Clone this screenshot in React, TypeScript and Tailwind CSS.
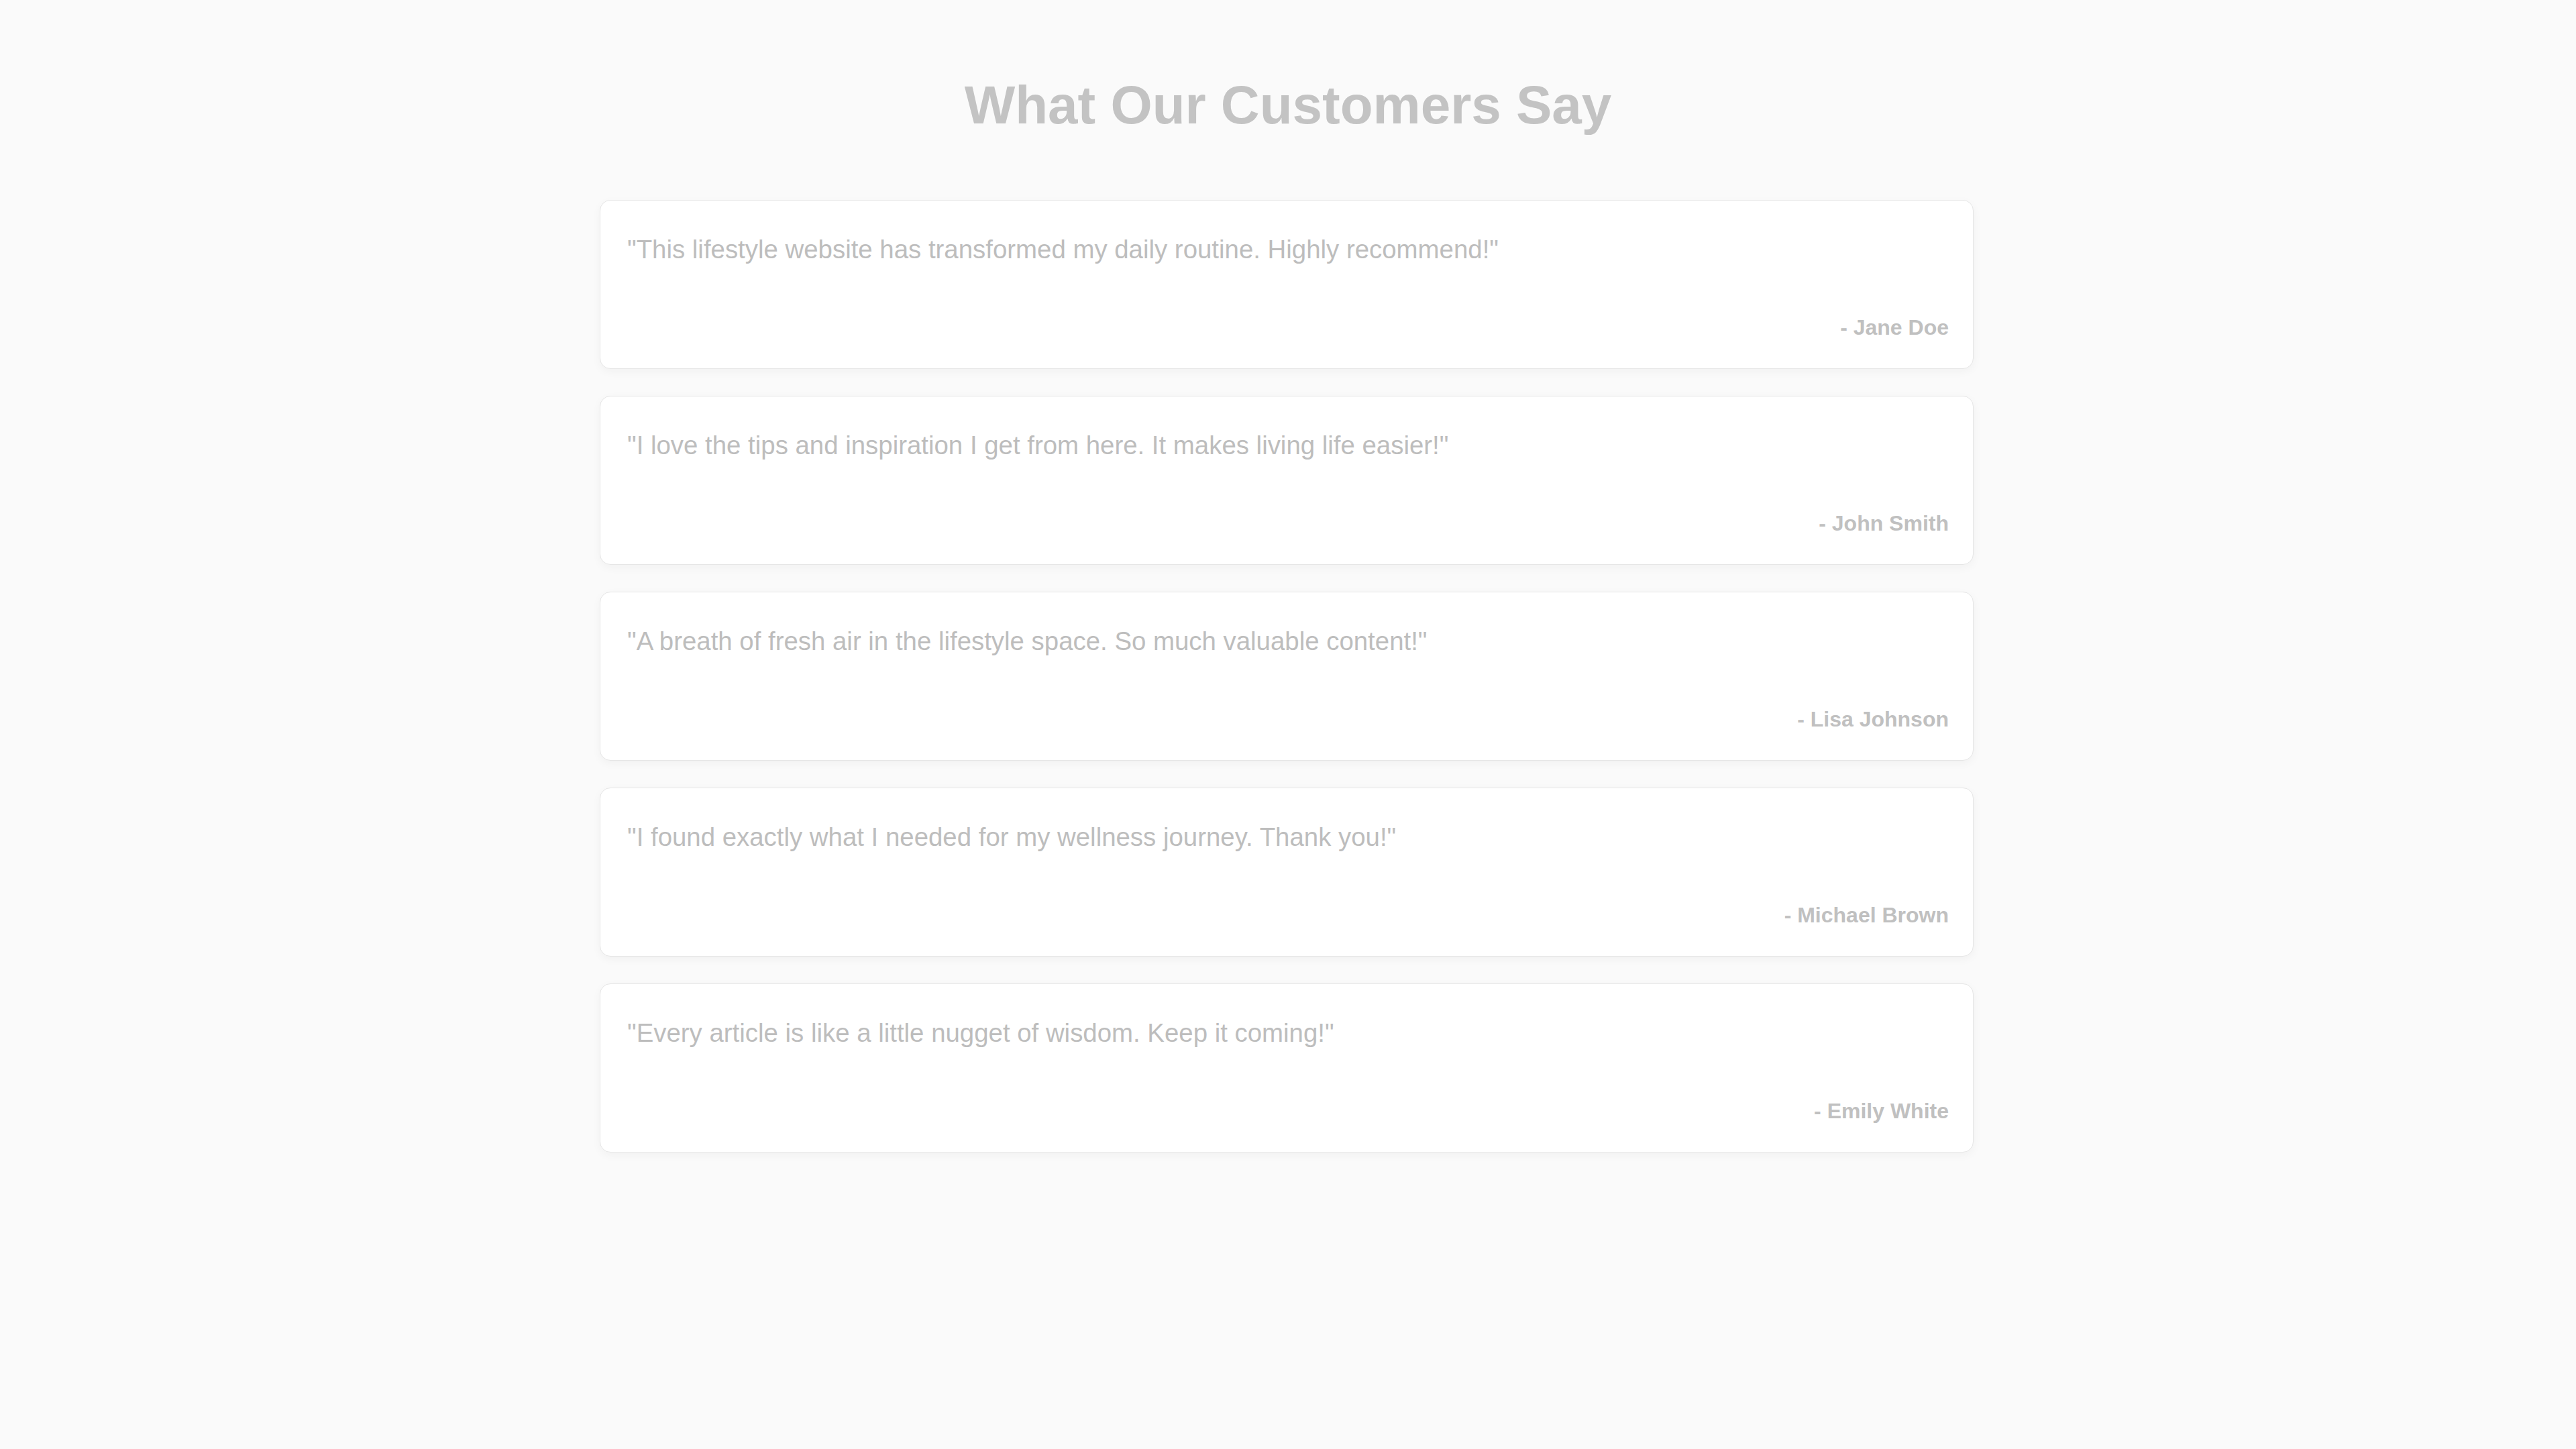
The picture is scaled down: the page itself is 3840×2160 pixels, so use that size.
const testimonials = [
  { quote: 'This lifestyle website has transformed my daily routine. Highly recommend!', name: 'Jane Doe' },
  { quote: 'I love the tips and inspiration I get from here. It makes living life easier!', name: 'John Smith' },
  { quote: 'A breath of fresh air in the lifestyle space. So much valuable content!', name: 'Lisa Johnson' },
  { quote: 'I found exactly what I needed for my wellness journey. Thank you!', name: 'Michael Brown' },
  { quote: 'Every article is like a little nugget of wisdom. Keep it coming!', name: 'Emily White' },
];

export default function App() {
  return (
    <div className="min-h-screen bg-[#fafafa] font-['Liberation_Sans',Arial,sans-serif] pt-[109px] pb-20">
      <h1 className="text-center text-[80px] leading-[96px] font-bold text-[#c3c3c3] mb-[93px]">
        What Our Customers Say
      </h1>
      <div className="mx-auto w-[2048px] -translate-x-[2px] flex flex-col gap-[40px]">
        {testimonials.map((t) => (
          <div
            key={t.name}
            className="bg-white border border-[#e6e6e6] rounded-[16px] shadow-[0_4px_14px_rgba(0,0,0,0.04)] pl-[40px] pr-[36px] pt-[41px] pb-[35px]"
          >
            <p className="text-[38.4px] leading-[64px] text-[#bdbdbd]">"{t.quote}"</p>
            <p className="mt-[59px] text-right text-[32px] leading-[51px] font-bold text-[#c0c0c0]">
              - {t.name}
            </p>
          </div>
        ))}
      </div>
    </div>
  );
}
